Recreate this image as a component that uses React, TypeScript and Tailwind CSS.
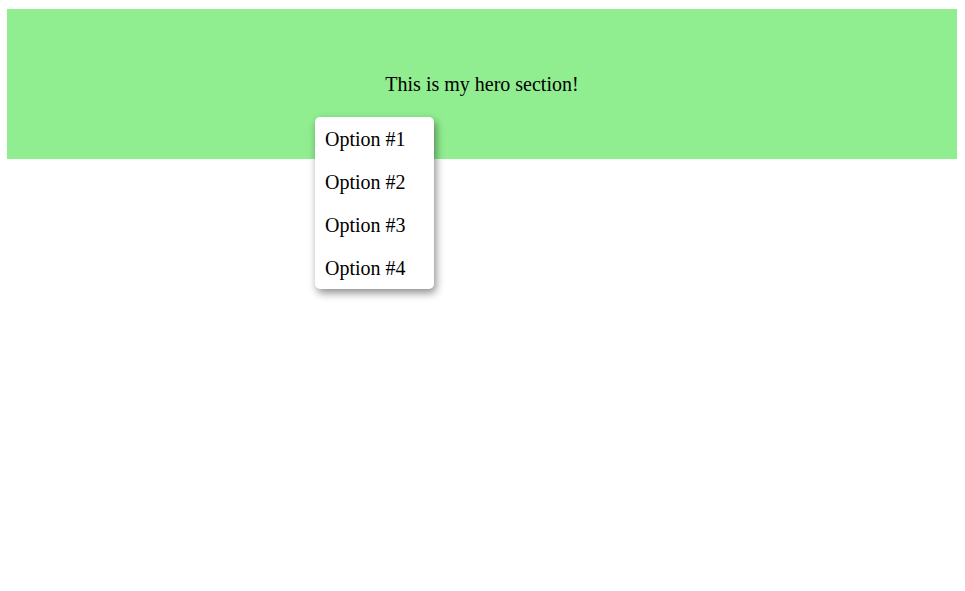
export default function App() {
  const options = ["Option #1", "Option #2", "Option #3", "Option #4"];
  return (
    <div className="min-h-[591px] bg-white pt-[9px] pl-[7px] pr-[8px] font-['Liberation_Serif',serif] text-black">
      <section className="relative flex h-[150px] items-center justify-center bg-[#90ee90]">
        <p className="pt-px text-[20px] leading-[23px]">This is my hero section!</p>
        <ul className="absolute left-[308px] top-[108px] w-[119px] rounded-[5px] bg-white shadow-[2px_4px_8px_rgba(0,0,0,0.45)]">
          {options.map((o) => (
            <li key={o} className="px-[10px] pt-[11px] pb-[9px] text-[20px] leading-[23px]">
              {o}
            </li>
          ))}
        </ul>
      </section>
    </div>
  );
}
